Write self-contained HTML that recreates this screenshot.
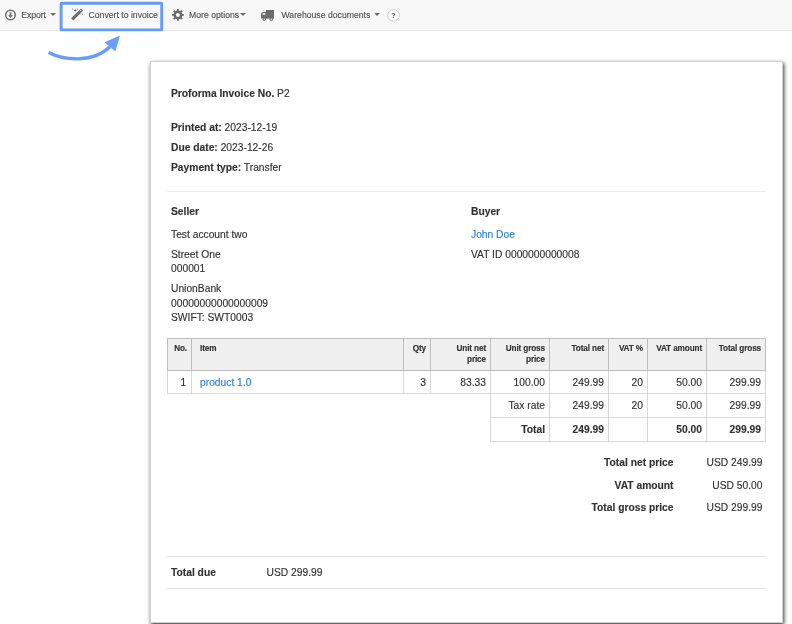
<!DOCTYPE html>
<html><head><meta charset="utf-8"><style>
html,body{margin:0;padding:0;width:792px;height:624px;overflow:hidden;background:#fff;position:relative;font-family:"Liberation Sans",sans-serif}
.t{position:absolute;white-space:nowrap;-webkit-text-stroke:0.15px currentColor}
.r{position:absolute}
#tb{position:absolute;left:0;top:0;width:792px;height:30px;background:#f8f8f8;border-bottom:1px solid #e5e5e5}
#paper{position:absolute;left:150px;top:61px;width:633px;height:562px;box-sizing:border-box;border:1px solid rgba(0,0,0,.18);background:#fff;box-shadow:1px 2px 4px rgba(0,0,0,.78)}
.hl{position:absolute;left:167px;width:599px;height:1px;background:#ebebeb}
</style></head><body>
<div id="paper"></div>
<div id="wrap" style="position:absolute;left:0;top:0;width:792px;height:624px;will-change:transform">
<div id="tb"></div><div class="t" style="left:21.3px;top:11.44px;font-size:8.69px;line-height:8.69px;color:#555;letter-spacing:-0.1px;">Export</div>
<div class="t" style="left:88.5px;top:11.44px;font-size:8.69px;line-height:8.69px;color:#555;">Convert to invoice</div>
<div class="t" style="left:189px;top:11.44px;font-size:8.69px;line-height:8.69px;color:#555;">More options</div>
<div class="t" style="left:281.5px;top:11.44px;font-size:8.69px;line-height:8.69px;color:#555;">Warehouse documents</div>
<div class="t" style="left:171px;top:89.11px;font-size:10.27px;line-height:10.27px;color:#333;"><b>Proforma Invoice No.</b> P2</div>
<div class="t" style="left:171px;top:123.11px;font-size:10.27px;line-height:10.27px;color:#333;"><b>Printed at:</b> 2023-12-19</div>
<div class="t" style="left:171px;top:143.11px;font-size:10.27px;line-height:10.27px;color:#333;"><b>Due date:</b> 2023-12-26</div>
<div class="t" style="left:171px;top:163.11px;font-size:10.27px;line-height:10.27px;color:#333;"><b>Payment type:</b> Transfer</div>
<div class="hl" style="top:191px"></div><div class="t" style="left:171px;top:207.11px;font-size:10.27px;line-height:10.27px;font-weight:bold;color:#333;">Seller</div>
<div class="t" style="left:471px;top:207.11px;font-size:10.27px;line-height:10.27px;font-weight:bold;color:#333;">Buyer</div>
<div class="t" style="left:171px;top:230.11px;font-size:10.27px;line-height:10.27px;color:#333;">Test account two</div>
<div class="t" style="left:471px;top:230.11px;font-size:10.27px;line-height:10.27px;color:#2a80d4;">John Doe</div>
<div class="t" style="left:171px;top:250.11px;font-size:10.27px;line-height:10.27px;color:#333;">Street One</div>
<div class="t" style="left:471px;top:250.11px;font-size:10.27px;line-height:10.27px;color:#333;">VAT ID 0000000000008</div>
<div class="t" style="left:171px;top:264.11px;font-size:10.27px;line-height:10.27px;color:#333;">000001</div>
<div class="t" style="left:171px;top:284.11px;font-size:10.27px;line-height:10.27px;color:#333;">UnionBank</div>
<div class="t" style="left:171px;top:299.11px;font-size:10.27px;line-height:10.27px;color:#333;">00000000000000009</div>
<div class="t" style="left:171px;top:313.11px;font-size:10.27px;line-height:10.27px;color:#333;">SWIFT: SWT0003</div>
<div class="r" style="left:167px;top:338px;width:599px;height:33px;background:#f0f0f0"></div><div class="r" style="left:167px;top:371px;width:1px;height:23px;background:#d8d8d8"></div><div class="r" style="left:191px;top:371px;width:1px;height:23px;background:#d8d8d8"></div><div class="r" style="left:403px;top:371px;width:1px;height:23px;background:#d8d8d8"></div><div class="r" style="left:430px;top:371px;width:1px;height:23px;background:#d8d8d8"></div><div class="r" style="left:490px;top:371px;width:1px;height:71px;background:#d8d8d8"></div><div class="r" style="left:549px;top:371px;width:1px;height:71px;background:#d8d8d8"></div><div class="r" style="left:608px;top:371px;width:1px;height:71px;background:#d8d8d8"></div><div class="r" style="left:647px;top:371px;width:1px;height:71px;background:#d8d8d8"></div><div class="r" style="left:706px;top:371px;width:1px;height:71px;background:#d8d8d8"></div><div class="r" style="left:765px;top:371px;width:1px;height:71px;background:#d8d8d8"></div><div class="r" style="left:167px;top:393px;width:599px;height:1px;background:#d8d8d8"></div><div class="r" style="left:490px;top:417px;width:276px;height:1px;background:#d8d8d8"></div><div class="r" style="left:490px;top:441px;width:276px;height:1px;background:#d8d8d8"></div><div class="r" style="left:167px;top:338px;width:1px;height:33px;background:#bdbdbd"></div><div class="r" style="left:191px;top:338px;width:1px;height:33px;background:#bdbdbd"></div><div class="r" style="left:403px;top:338px;width:1px;height:33px;background:#bdbdbd"></div><div class="r" style="left:430px;top:338px;width:1px;height:33px;background:#bdbdbd"></div><div class="r" style="left:490px;top:338px;width:1px;height:33px;background:#bdbdbd"></div><div class="r" style="left:549px;top:338px;width:1px;height:33px;background:#bdbdbd"></div><div class="r" style="left:608px;top:338px;width:1px;height:33px;background:#bdbdbd"></div><div class="r" style="left:647px;top:338px;width:1px;height:33px;background:#bdbdbd"></div><div class="r" style="left:706px;top:338px;width:1px;height:33px;background:#bdbdbd"></div><div class="r" style="left:765px;top:338px;width:1px;height:33px;background:#bdbdbd"></div><div class="r" style="left:167px;top:338px;width:599px;height:1px;background:#bdbdbd"></div><div class="r" style="left:167px;top:370px;width:599px;height:1px;background:#bdbdbd"></div><div class="t" style="left:200px;top:344.86px;font-size:8.2px;line-height:8.2px;font-weight:bold;color:#333;letter-spacing:-0.12px;">Item</div>
<div class="t" style="right:605px;top:344.86px;font-size:8.2px;line-height:8.2px;font-weight:bold;color:#333;text-align:right;letter-spacing:-0.12px;">No.</div>
<div class="t" style="right:366px;top:344.86px;font-size:8.2px;line-height:8.2px;font-weight:bold;color:#333;text-align:right;letter-spacing:-0.12px;">Qty</div>
<div class="t" style="right:306px;top:344.86px;font-size:8.2px;line-height:8.2px;font-weight:bold;color:#333;text-align:right;letter-spacing:-0.12px;">Unit net</div>
<div class="t" style="right:306px;top:355.86px;font-size:8.2px;line-height:8.2px;font-weight:bold;color:#333;text-align:right;letter-spacing:-0.12px;">price</div>
<div class="t" style="right:247px;top:344.86px;font-size:8.2px;line-height:8.2px;font-weight:bold;color:#333;text-align:right;letter-spacing:-0.12px;">Unit gross</div>
<div class="t" style="right:247px;top:355.86px;font-size:8.2px;line-height:8.2px;font-weight:bold;color:#333;text-align:right;letter-spacing:-0.12px;">price</div>
<div class="t" style="right:188px;top:344.86px;font-size:8.2px;line-height:8.2px;font-weight:bold;color:#333;text-align:right;letter-spacing:-0.12px;">Total net</div>
<div class="t" style="right:149px;top:344.86px;font-size:8.2px;line-height:8.2px;font-weight:bold;color:#333;text-align:right;letter-spacing:-0.12px;">VAT %</div>
<div class="t" style="right:90px;top:344.86px;font-size:8.2px;line-height:8.2px;font-weight:bold;color:#333;text-align:right;letter-spacing:-0.12px;">VAT amount</div>
<div class="t" style="right:31px;top:344.86px;font-size:8.2px;line-height:8.2px;font-weight:bold;color:#333;text-align:right;letter-spacing:-0.12px;">Total gross</div>
<div class="t" style="left:200px;top:378.11px;font-size:10.27px;line-height:10.27px;color:#2a80d4;">product 1.0</div>
<div class="t" style="right:605.8px;top:378.11px;font-size:10.27px;line-height:10.27px;color:#333;text-align:right;">1</div>
<div class="t" style="right:366px;top:378.11px;font-size:10.27px;line-height:10.27px;color:#333;text-align:right;">3</div>
<div class="t" style="right:306px;top:378.11px;font-size:10.27px;line-height:10.27px;color:#333;text-align:right;">83.33</div>
<div class="t" style="right:247px;top:378.11px;font-size:10.27px;line-height:10.27px;color:#333;text-align:right;">100.00</div>
<div class="t" style="right:188px;top:378.11px;font-size:10.27px;line-height:10.27px;color:#333;text-align:right;">249.99</div>
<div class="t" style="right:149px;top:378.11px;font-size:10.27px;line-height:10.27px;color:#333;text-align:right;">20</div>
<div class="t" style="right:90px;top:378.11px;font-size:10.27px;line-height:10.27px;color:#333;text-align:right;">50.00</div>
<div class="t" style="right:31px;top:378.11px;font-size:10.27px;line-height:10.27px;color:#333;text-align:right;">299.99</div>
<div class="t" style="right:247px;top:401.11px;font-size:10.27px;line-height:10.27px;color:#333;text-align:right;">Tax rate</div>
<div class="t" style="right:188px;top:401.11px;font-size:10.27px;line-height:10.27px;color:#333;text-align:right;">249.99</div>
<div class="t" style="right:149px;top:401.11px;font-size:10.27px;line-height:10.27px;color:#333;text-align:right;">20</div>
<div class="t" style="right:90px;top:401.11px;font-size:10.27px;line-height:10.27px;color:#333;text-align:right;">50.00</div>
<div class="t" style="right:31px;top:401.11px;font-size:10.27px;line-height:10.27px;color:#333;text-align:right;">299.99</div>
<div class="t" style="right:247px;top:425.11px;font-size:10.27px;line-height:10.27px;font-weight:bold;color:#333;text-align:right;">Total</div>
<div class="t" style="right:188px;top:425.11px;font-size:10.27px;line-height:10.27px;font-weight:bold;color:#333;text-align:right;">249.99</div>
<div class="t" style="right:90px;top:425.11px;font-size:10.27px;line-height:10.27px;font-weight:bold;color:#333;text-align:right;">50.00</div>
<div class="t" style="right:31px;top:425.11px;font-size:10.27px;line-height:10.27px;font-weight:bold;color:#333;text-align:right;">299.99</div>
<div class="t" style="right:118.5px;top:458.11px;font-size:10.27px;line-height:10.27px;font-weight:bold;color:#333;text-align:right;">Total net price</div>
<div class="t" style="right:29.5px;top:458.11px;font-size:10.27px;line-height:10.27px;color:#333;text-align:right;">USD 249.99</div>
<div class="t" style="right:118.5px;top:481.11px;font-size:10.27px;line-height:10.27px;font-weight:bold;color:#333;text-align:right;">VAT amount</div>
<div class="t" style="right:29.5px;top:481.11px;font-size:10.27px;line-height:10.27px;color:#333;text-align:right;">USD 50.00</div>
<div class="t" style="right:118.5px;top:503.11px;font-size:10.27px;line-height:10.27px;font-weight:bold;color:#333;text-align:right;">Total gross price</div>
<div class="t" style="right:29.5px;top:503.11px;font-size:10.27px;line-height:10.27px;color:#333;text-align:right;">USD 299.99</div>
<div class="hl" style="top:556px;background:#e3e3e3"></div><div class="t" style="left:171px;top:568.11px;font-size:10.27px;line-height:10.27px;font-weight:bold;color:#333;">Total due</div>
<div class="t" style="left:266.5px;top:568.11px;font-size:10.27px;line-height:10.27px;color:#333;">USD 299.99</div>
<div class="hl" style="top:588px;background:#e3e3e3"></div>
<svg style="position:absolute;left:0;top:0" width="792" height="624" viewBox="0 0 792 624">
<!-- blue highlight frame -->
<rect x="61.1" y="3.2" width="100.6" height="26.7" rx="0.4" fill="none" stroke="#659cfa" stroke-width="2.9"/>
<!-- export icon -->
<g fill="#6c6c6c">
<circle cx="10.5" cy="14.9" r="4.75" fill="none" stroke="#6c6c6c" stroke-width="1.5"/>
<rect x="9.6" y="12.3" width="1.8" height="3.2"/>
<path d="M8 15.3 L13 15.3 L10.5 17.9 Z"/>
<path d="M50 12.9 L56.1 12.9 L53 15.9 Z"/>
</g>
<!-- wand -->
<g fill="#6c6c6c" stroke="none">
<path d="M72.2 19.4 L82 9.6" stroke="#6c6c6c" stroke-width="3" fill="none"/>
<path d="M79.9 11.3 L81.2 10.0" stroke="#f8f8f8" stroke-width="1" fill="none"/>
<path d="M75.2 9.0 L75.75 9.85 L76.6 10.4 L75.75 10.95 L75.2 11.8 L74.65 10.95 L73.8 10.4 L74.65 9.85 Z"/>
<circle cx="72.4" cy="9.1" r="0.5"/>
<circle cx="77.5" cy="8.9" r="0.5"/>
<circle cx="82.6" cy="14.2" r="0.5"/>
</g>
<!-- gear -->
<g transform="translate(177.9,14.9)" fill="#6c6c6c">
<circle r="4.4"/>
<rect x="-0.95" y="-5.9" width="1.9" height="3" transform="rotate(0)"/><rect x="-0.95" y="-5.9" width="1.9" height="3" transform="rotate(45)"/><rect x="-0.95" y="-5.9" width="1.9" height="3" transform="rotate(90)"/><rect x="-0.95" y="-5.9" width="1.9" height="3" transform="rotate(135)"/><rect x="-0.95" y="-5.9" width="1.9" height="3" transform="rotate(180)"/><rect x="-0.95" y="-5.9" width="1.9" height="3" transform="rotate(225)"/><rect x="-0.95" y="-5.9" width="1.9" height="3" transform="rotate(270)"/><rect x="-0.95" y="-5.9" width="1.9" height="3" transform="rotate(315)"/>
<circle r="2" fill="#f8f8f8"/>
</g>
<path d="M240 12.9 L246.1 12.9 L243 15.9 Z" fill="#6c6c6c"/>
<!-- truck -->
<g fill="#6c6c6c">
<rect x="266" y="10" width="8" height="8.6"/>
<path d="M261 18.6 L261 14.6 Q261 12.1 263.5 12.1 L266.5 12.1 L266.5 18.6 Z"/>
<path d="M262.3 14.8 L262.9 13.2 L265.4 13.2 L265.4 14.8 Z" fill="#f8f8f8"/>
<circle cx="264.3" cy="19.2" r="1.7"/>
<circle cx="271.3" cy="19.2" r="1.7"/>
<circle cx="264.3" cy="19.2" r="0.7" fill="#f8f8f8"/>
<circle cx="271.3" cy="19.2" r="0.7" fill="#f8f8f8"/>
</g>
<path d="M374.1 12.9 L380.1 12.9 L377 15.9 Z" fill="#6c6c6c"/>
<!-- help -->
<circle cx="393.5" cy="15.4" r="5.8" fill="#fff" stroke="#cfcfcf" stroke-width="1"/>
<text x="393.5" y="17.9" font-family="Liberation Sans" font-weight="bold" font-size="7" fill="#6c6c6c" text-anchor="middle">?</text>
<!-- curved arrow -->
<path d="M48.6 52.4 C60 58.3, 90 65.5, 110 46.75" fill="none" stroke="#689ef8" stroke-width="3.4"/>
<path d="M120 35.6 L104.6 42.2 L115.4 51.5 Z" fill="#689ef8"/>
</svg>
</div>
</body></html>
